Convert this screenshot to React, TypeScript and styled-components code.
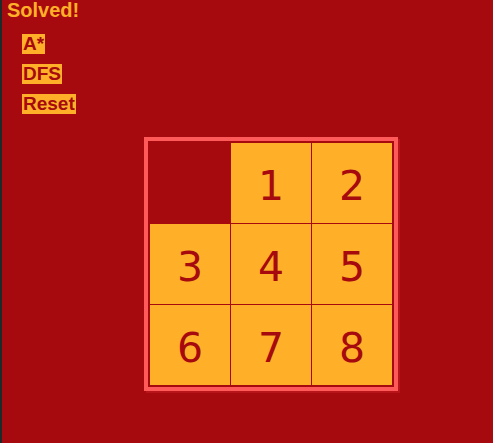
import styled, { createGlobalStyle } from "styled-components";

const RED = "#a6090e";
const ORANGE = "#ffb028";
const FRAME = "#ff5a5a";

const GlobalStyle = createGlobalStyle`
    html, body {
        margin: 0;
        padding: 0;
        background-color: ${RED};
        font-family: "Liberation Sans", Arial, sans-serif;
    }
`;

const tiles = [0, 1, 2, 3, 4, 5, 6, 7, 8];

export default function App() {
    return (
        <>
            <GlobalStyle />
            <Page>
                <Status>Solved!</Status>
                <Controls>
                    <ActionButton>A*</ActionButton>
                    <ActionButton>DFS</ActionButton>
                    <ActionButton>Reset</ActionButton>
                </Controls>
                <Board>
                    {tiles.map((n) => (
                        <Tile key={n} $empty={n === 0}>
                            {n === 0 ? "" : n}
                        </Tile>
                    ))}
                </Board>
            </Page>
        </>
    );
}

const Page = styled.div`
    display: flex;
    flex-direction: column;
    align-items: flex-start;
    min-height: 443px;
    box-sizing: border-box;
    border-left: 2px solid #1c2a2a;
    padding: 0 0 0 5px;
`;

const Status = styled.div`
    color: ${ORANGE};
    font-size: 20px;
    font-weight: 700;
    line-height: 20px;
`;

const Controls = styled.div`
    display: flex;
    flex-direction: column;
    align-items: flex-start;
    gap: 10px;
    margin: 14px 0 0 15px;
`;

const ActionButton = styled.button`
    background-color: ${ORANGE};
    color: ${RED};
    border: none;
    padding: 0 1px;
    font-family: "Liberation Sans", Arial, sans-serif;
    font-size: 19px;
    font-weight: 700;
    line-height: 20px;
    height: 20px;
    cursor: pointer;
`;

const Board = styled.div`
    display: grid;
    grid-template-columns: repeat(3, 80px);
    grid-auto-rows: 80px;
    gap: 1px;
    padding: 2px;
    margin: 23px 0 0 137px;
    border: 4px solid ${FRAME};
    background-color: ${RED};
    box-shadow: 2px 2px 0 #b8151b;
`;

const Tile = styled.div<{ $empty: boolean }>`
    display: flex;
    align-items: center;
    justify-content: center;
    padding-top: 6px;
    box-sizing: border-box;
    background-color: ${({ $empty }) => ($empty ? RED : ORANGE)};
    color: ${RED};
    font-family: "DejaVu Sans", Verdana, sans-serif;
    font-size: 41px;
`;
